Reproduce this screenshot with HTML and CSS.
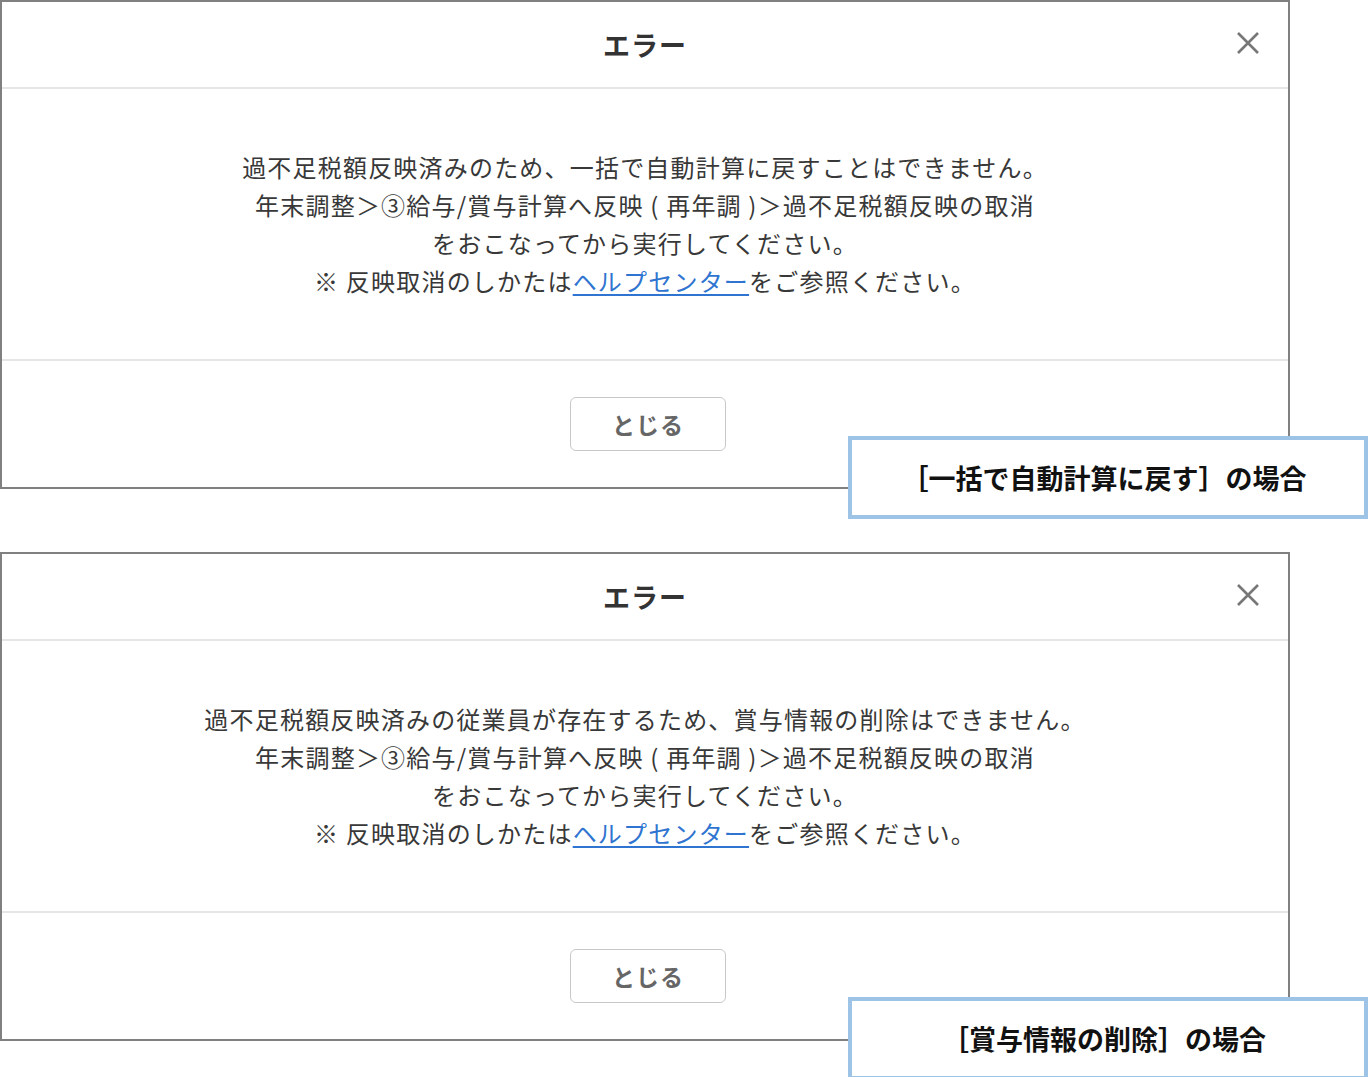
FILE: index.html
```html
<!DOCTYPE html>
<html lang="ja">
<head>
<meta charset="utf-8">
<title>エラー</title>
<link rel="stylesheet" href="styles.css">
</head>
<body>
<div class="page">
  <section class="case case-first">
    <div class="dialog">
      <header class="dialog-header">
        <span></span>
        <h1 class="dialog-title">エラー</h1>
        <button class="close" aria-label="閉じる">
          <svg width="24" height="24" viewBox="0 0 24 24"><path d="M2 2 L22 22 M22 2 L2 22" stroke="#777" stroke-width="2.6" fill="none"/></svg>
        </button>
      </header>
      <div class="dialog-body">
        <p>過不足税額反映済みのため、一括で自動計算に戻すことはできません。</p>
        <p>年末調整＞③給与/賞与計算へ反映 ( 再年調 )＞過不足税額反映の取消</p>
        <p>をおこなってから実行してください。</p>
        <p>※ 反映取消のしかたは<a href="#">ヘルプセンター</a>をご参照ください。</p>
      </div>
      <footer class="dialog-footer">
        <button class="btn">とじる</button>
      </footer>
    </div>
    <div class="label label-first"><span class="label-text">［一括で自動計算に戻す］の場合</span></div>
  </section>

  <section class="case case-second">
    <div class="dialog">
      <header class="dialog-header">
        <span></span>
        <h1 class="dialog-title">エラー</h1>
        <button class="close" aria-label="閉じる">
          <svg width="24" height="24" viewBox="0 0 24 24"><path d="M2 2 L22 22 M22 2 L2 22" stroke="#777" stroke-width="2.6" fill="none"/></svg>
        </button>
      </header>
      <div class="dialog-body">
        <p>過不足税額反映済みの従業員が存在するため、賞与情報の削除はできません。</p>
        <p>年末調整＞③給与/賞与計算へ反映 ( 再年調 )＞過不足税額反映の取消</p>
        <p>をおこなってから実行してください。</p>
        <p>※ 反映取消のしかたは<a href="#">ヘルプセンター</a>をご参照ください。</p>
      </div>
      <footer class="dialog-footer">
        <button class="btn">とじる</button>
      </footer>
    </div>
    <div class="label label-second"><span class="label-text">［賞与情報の削除］の場合</span></div>
  </section>
</div>
</body>
</html>
```

FILE: styles.css
```css
html, body {
  margin: 0;
  padding: 0;
  background: #ffffff;
}

body {
  font-family: "Noto Sans CJK JP", "Noto Sans", sans-serif;
  color: #333333;
  width: 1368px;
  height: 1077px;
  overflow: hidden;
  text-spacing-trim: space-all;
}

.page {
  display: flex;
  flex-direction: column;
  gap: 63px;
}

.case {
  position: relative;
  width: 1368px;
}

.dialog {
  width: 1290px;
  box-sizing: border-box;
  border: 2px solid #808080;
  background: #ffffff;
  display: flex;
  flex-direction: column;
}

.dialog-header {
  height: 85px;
  border-bottom: 2px solid #e6e6e6;
  display: grid;
  grid-template-columns: 1fr auto 1fr;
  align-items: center;
}

.dialog-title {
  margin: 0;
  font-size: 27px;
  font-weight: 700;
  letter-spacing: 1px;
  color: #333333;
  line-height: 1;
}

.close {
  justify-self: end;
  margin-right: 28px;
  margin-bottom: 4px;
  padding: 0;
  border: 0;
  background: transparent;
  width: 24px;
  height: 24px;
  display: flex;
}

.dialog-body {
  padding: 59px 20px;
  border-bottom: 2px solid #e6e6e6;
  text-align: center;
}

.dialog-body p {
  margin: 0;
  font-size: 24px;
  line-height: 38px;
  letter-spacing: 1.2px;
  color: #383838;
}

.dialog-body a {
  color: #2f74d0;
  text-decoration: underline;
  text-underline-offset: 3px;
}

.dialog-footer {
  padding: 36px 0 36px 6px;
  display: flex;
  justify-content: center;
}

.btn {
  width: 156px;
  height: 54px;
  box-sizing: border-box;
  border: 1.5px solid #c8c8c8;
  border-radius: 6px;
  background: #ffffff;
  font-family: "Noto Sans CJK JP", "Noto Sans", sans-serif;
  font-size: 23px;
  font-weight: 700;
  letter-spacing: 1px;
  color: #666666;
  padding: 0;
}

.label {
  position: absolute;
  left: 848px;
  width: 520px;
  height: 83px;
  box-sizing: border-box;
  border: 4px solid #9dc3e6;
  background: #ffffff;
  display: flex;
  align-items: center;
  justify-content: center;
  padding-right: 8px;
  font-size: 27px;
  font-weight: 700;
  color: #111111;
}

.label-text {
  white-space: nowrap;
}

.label-first {
  top: 436px;
}

.label-second {
  top: 445px;
}
```
